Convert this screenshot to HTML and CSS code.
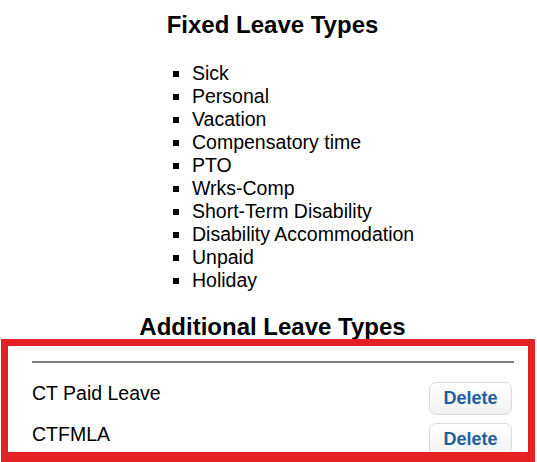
FILE: index.html
```html
<!DOCTYPE html>
<html>
<head>
<meta charset="utf-8">
<link rel="stylesheet" href="styles.css">
</head>
<body>
<div class="page">
  <h2 class="heading heading-first">Fixed Leave Types</h2>
  <ul class="fixed-list">
    <li>Sick</li>
    <li>Personal</li>
    <li>Vacation</li>
    <li>Compensatory time</li>
    <li>PTO</li>
    <li>Wrks-Comp</li>
    <li>Short-Term Disability</li>
    <li>Disability Accommodation</li>
    <li>Unpaid</li>
    <li>Holiday</li>
  </ul>
  <h2 class="heading heading-second">Additional Leave Types</h2>
  <section class="additional">
    <div class="divider"></div>
    <div class="row">
      <span class="row-name">CT Paid Leave</span>
      <button class="delete-btn">Delete</button>
    </div>
    <div class="row">
      <span class="row-name">CTFMLA</span>
      <button class="delete-btn">Delete</button>
    </div>
  </section>
</div>
</body>
</html>
```

FILE: styles.css
```css
html, body {
  margin: 0;
  padding: 0;
  background: #ffffff;
  overflow: hidden;
}
body {
  font-family: "Liberation Sans", Arial, sans-serif;
  color: #000;
  height: 462px;
}
.page {
  padding-left: 8px;
}
.heading {
  font-size: 24px;
  font-weight: bold;
  line-height: 28px;
  text-align: center;
  margin: 0;
}
.heading-first {
  margin-top: 11px;
}
.heading-second {
  margin-top: 21px;
}
.fixed-list {
  list-style: square;
  margin: 23px 0 0 0;
  padding-left: 184px;
  font-size: 19.5px;
  line-height: 23px;
}
.additional {
  position: relative;
  margin: -2px 2px 0 -7px;
  padding: 22px 21px 0 31px;
}
.additional::after {
  content: "";
  position: absolute;
  left: 0;
  top: 0;
  width: 100%;
  height: 125px;
  box-sizing: border-box;
  border: 7px solid #e42124;
  border-bottom-width: 12px;
  pointer-events: none;
}
.divider {
  height: 2px;
  background: #808080;
  margin-bottom: 19px;
}
.row {
  display: flex;
  justify-content: space-between;
  align-items: flex-start;
  height: 41px;
  padding-right: 2px;
}
.row-name {
  font-size: 19.5px;
  line-height: 23px;
}
.delete-btn {
  font-family: "Liberation Sans", Arial, sans-serif;
  font-size: 18px;
  font-weight: bold;
  color: #1f5f9e;
  width: 83px;
  height: 33px;
  padding: 0;
  border: 1px solid #dcdcdc;
  border-radius: 7px;
  background: linear-gradient(#ffffff, #f1f1f1);
}
```
